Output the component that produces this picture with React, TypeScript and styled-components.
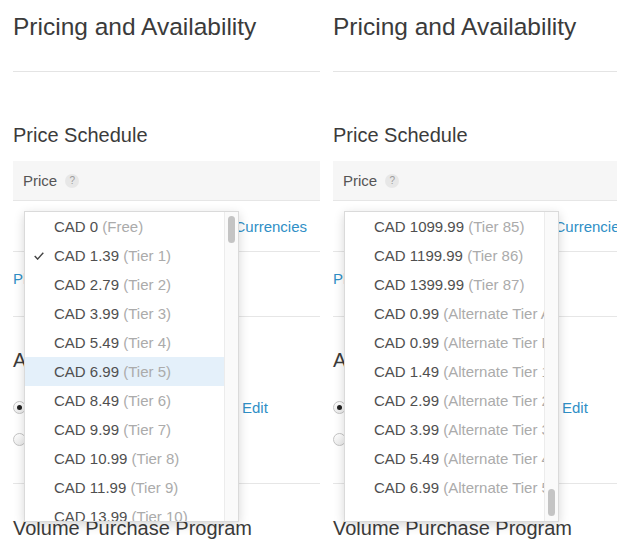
import React from "react";
import styled, { createGlobalStyle } from "styled-components";

const GlobalStyle = createGlobalStyle`
  html, body {
    margin: 0;
    padding: 0;
    background: #fff;
  }
  body {
    width: 617px;
    height: 560px;
    overflow: hidden;
    font-family: "Liberation Sans", Arial, sans-serif;
    -webkit-font-smoothing: antialiased;
  }
`;

type Option = { price: string; tier: string };

const firstTiers: Option[] = [
  { price: "CAD 0", tier: "Free" },
  { price: "CAD 1.39", tier: "Tier 1" },
  { price: "CAD 2.79", tier: "Tier 2" },
  { price: "CAD 3.99", tier: "Tier 3" },
  { price: "CAD 5.49", tier: "Tier 4" },
  { price: "CAD 6.99", tier: "Tier 5" },
  { price: "CAD 8.49", tier: "Tier 6" },
  { price: "CAD 9.99", tier: "Tier 7" },
  { price: "CAD 10.99", tier: "Tier 8" },
  { price: "CAD 11.99", tier: "Tier 9" },
  { price: "CAD 13.99", tier: "Tier 10" },
];

const lastTiers: Option[] = [
  { price: "CAD 1099.99", tier: "Tier 85" },
  { price: "CAD 1199.99", tier: "Tier 86" },
  { price: "CAD 1399.99", tier: "Tier 87" },
  { price: "CAD 0.99", tier: "Alternate Tier A" },
  { price: "CAD 0.99", tier: "Alternate Tier B" },
  { price: "CAD 1.49", tier: "Alternate Tier 1" },
  { price: "CAD 2.99", tier: "Alternate Tier 2" },
  { price: "CAD 3.99", tier: "Alternate Tier 3" },
  { price: "CAD 5.49", tier: "Alternate Tier 4" },
  { price: "CAD 6.99", tier: "Alternate Tier 5" },
];

const Screen = styled.div`
  display: flex;
  width: 640px;
`;

const Panel = styled.section`
  position: relative;
  flex: none;
  width: 320px;
  padding-left: 13px;
  box-sizing: border-box;
`;

const PageTitle = styled.h1`
  margin: 12px 0 0;
  padding-bottom: 29px;
  border-bottom: 1px solid #e4e4e4;
  font-size: 24.5px;
  line-height: 30px;
  font-weight: normal;
  color: #3b3b3b;
  white-space: nowrap;
`;

const SectionTitle = styled.h2<{ $top: number; $bottom?: number }>`
  margin: ${(p) => p.$top}px 0 ${(p) => p.$bottom ?? 0}px;
  font-size: 20px;
  line-height: 24px;
  font-weight: normal;
  color: #3b3b3b;
  white-space: nowrap;
`;

const PriceHeader = styled.div`
  display: flex;
  align-items: center;
  gap: 8px;
  height: 39px;
  padding-left: 10px;
  background: #f6f6f6;
  border-bottom: 1px solid #e6e6e6;
  font-size: 15px;
  color: #555;
`;

const Help = styled.span`
  display: inline-flex;
  align-items: center;
  justify-content: center;
  width: 14px;
  height: 14px;
  border-radius: 50%;
  background: #e7e7e7;
  color: #9d9d9d;
  font-size: 10px;
`;

const Link = styled.a`
  color: #2f8fc6;
  font-size: 15px;
  text-decoration: none;
  white-space: nowrap;
  cursor: pointer;
`;

const CurrencyRow = styled.div`
  display: flex;
  justify-content: flex-end;
  align-items: center;
  height: 51px;
  padding: 1px 13px 0 0;
  box-sizing: border-box;
  border-bottom: 1px solid #e6e6e6;
`;

const PlanRow = styled.div`
  padding: 17px 0 27px;
  line-height: 20px;
  border-bottom: 1px solid #e6e6e6;
`;

const RadioGroup = styled.div`
  margin-top: 19px;
  padding-bottom: 28px;
  border-bottom: 1px solid #e6e6e6;
`;

const RadioRow = styled.label`
  display: flex;
  align-items: center;
  height: 32px;
  font-size: 15px;
  color: #555;
`;

const Radio = styled.span<{ $checked?: boolean }>`
  position: relative;
  flex: none;
  width: 13px;
  height: 13px;
  border: 1px solid #c4c4c4;
  border-radius: 50%;
  box-sizing: border-box;
  background: linear-gradient(#fff, #ececec);

  &::after {
    content: "";
    display: ${(p) => (p.$checked ? "block" : "none")};
    position: absolute;
    left: 3px;
    top: 3px;
    width: 5px;
    height: 5px;
    border-radius: 50%;
    background: #222;
  }
`;

const RadioLabel = styled.span`
  flex: none;
  width: 208px;
  margin-left: 8px;
  white-space: nowrap;
  overflow: hidden;
`;

const Dropdown = styled.div`
  position: absolute;
  left: 24px;
  top: 211px;
  z-index: 2;
  display: flex;
  width: 215px;
  height: 311px;
  box-sizing: border-box;
  border: 1px solid #dadada;
  background: #fff;
  box-shadow: 0 3px 10px rgba(0, 0, 0, 0.16);
  overflow: hidden;
`;

const Options = styled.ul`
  flex: 1;
  min-width: 0;
  margin: 0;
  padding: 0;
  list-style: none;
  overflow: hidden;
`;

const Item = styled.li<{ $active?: boolean }>`
  position: relative;
  display: flex;
  align-items: center;
  height: 29px;
  padding-left: 29px;
  background: ${(p) => (p.$active ? "#e4f0fa" : "transparent")};
  font-size: 15px;
  color: #4f4f4f;
  white-space: nowrap;
  overflow: hidden;
`;

const Tier = styled.span`
  color: #ababab;
`;

const Check = styled.svg`
  position: absolute;
  left: 9px;
  top: 11px;
`;

const Track = styled.div`
  position: relative;
  flex: none;
  width: 13px;
  border-left: 1px solid #ececec;
  background: #fafafa;
`;

const Thumb = styled.div`
  position: absolute;
  left: 3px;
  width: 7px;
  height: 27px;
  border-radius: 4px;
  background: #c4c4c4;
`;

function PriceList({
  options,
  selected,
  active,
  scroll,
}: {
  options: Option[];
  selected?: number;
  active?: number;
  scroll: number;
}) {
  const trackHeight = 309;
  const thumbTop = 4 + scroll * (trackHeight - 9 - 27);
  return (
    <Dropdown>
      <Options>
        {options.map((o, i) => (
          <Item key={i} $active={i === active}>
            {i === selected && (
              <Check width="10" height="8" viewBox="0 0 10 8">
                <path d="M0.7 4.1 L3.6 7.1 L9.3 0.7" fill="none" stroke="#444" strokeWidth="1.4" />
              </Check>
            )}
            {o.price}&nbsp;<Tier>({o.tier})</Tier>
          </Item>
        ))}
      </Options>
      <Track>
        <Thumb style={{ top: thumbTop }} />
      </Track>
    </Dropdown>
  );
}

function PricingPanel({ children }: { children: React.ReactNode }) {
  return (
    <Panel>
      <PageTitle>Pricing and Availability</PageTitle>
      <SectionTitle $top={51} $bottom={14}>
        Price Schedule
      </SectionTitle>
      <PriceHeader>
        Price <Help>?</Help>
      </PriceHeader>
      <CurrencyRow>
        <Link>All Prices and Currencies</Link>
      </CurrencyRow>
      <PlanRow>
        <Link>Plan a Price Change</Link>
      </PlanRow>
      <SectionTitle $top={31}>Availability</SectionTitle>
      <RadioGroup>
        <RadioRow>
          <Radio $checked />
          <RadioLabel>Available in all territories</RadioLabel>
          <Link>Edit</Link>
        </RadioRow>
        <RadioRow>
          <Radio />
          <RadioLabel>Available in selected territories</RadioLabel>
        </RadioRow>
      </RadioGroup>
      <SectionTitle $top={32}>Volume Purchase Program</SectionTitle>
      {children}
    </Panel>
  );
}

export default function App() {
  return (
    <>
      <GlobalStyle />
      <Screen>
        <PricingPanel>
          <PriceList options={firstTiers} selected={1} active={5} scroll={0} />
        </PricingPanel>
        <PricingPanel>
          <PriceList options={lastTiers} scroll={1} />
        </PricingPanel>
      </Screen>
    </>
  );
}
